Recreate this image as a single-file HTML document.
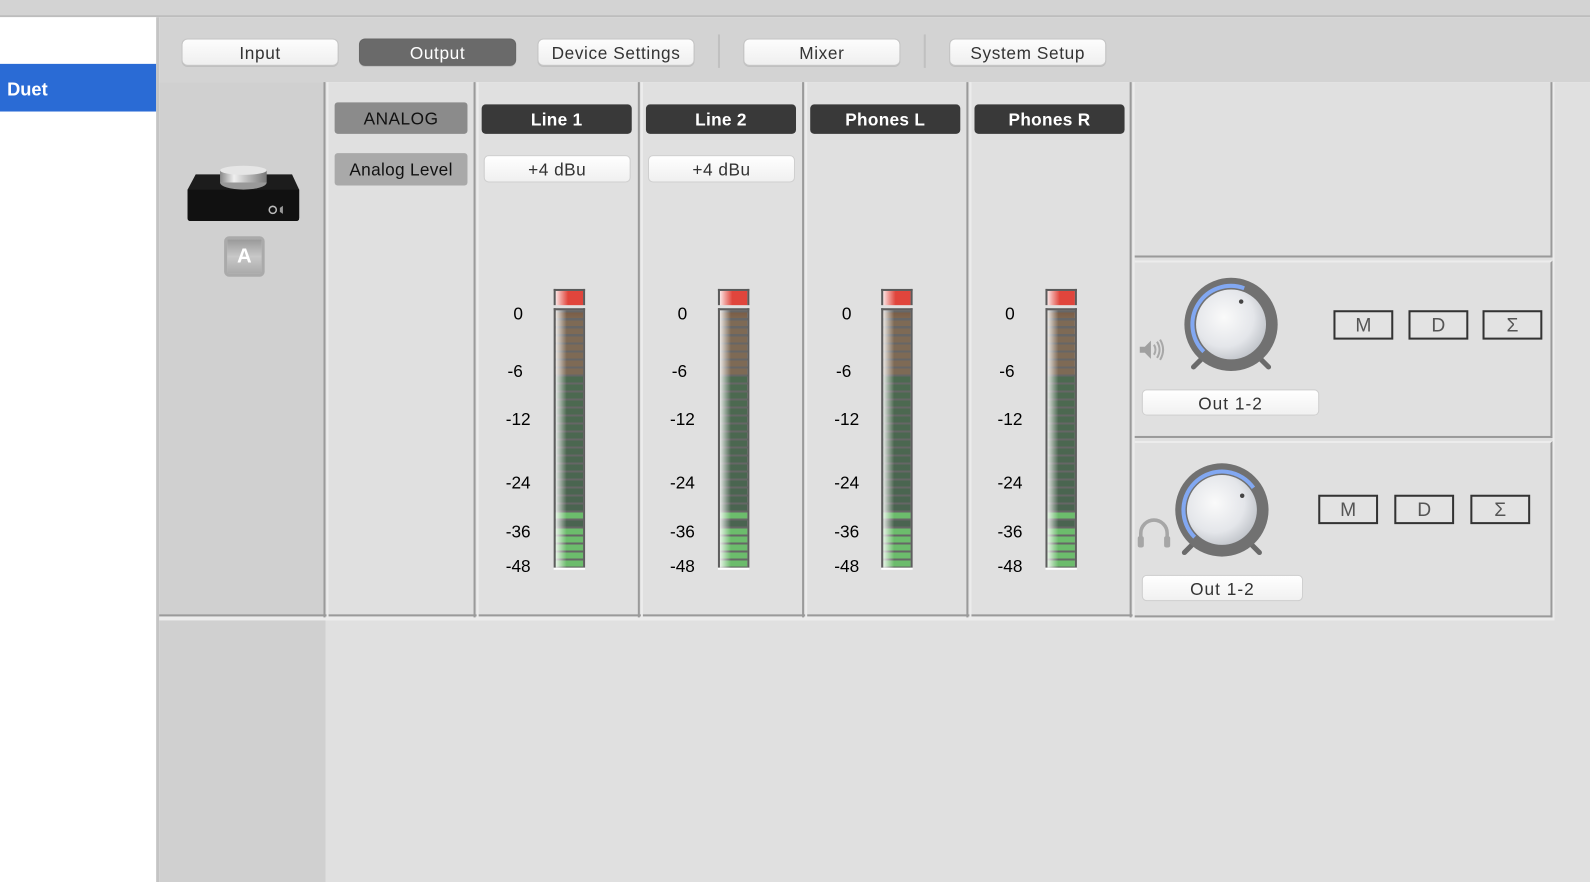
<!DOCTYPE html>
<html><head><meta charset="utf-8">
<style>
html,body{margin:0;padding:0;width:1590px;height:882px;overflow:hidden;background:#fff;font-family:"Liberation Sans",sans-serif;}
#w{position:absolute;left:0;top:0;width:1568px;height:870px;transform:scale(1.01403,1.0138);transform-origin:0 0;background:#fff;}
.a{position:absolute;box-sizing:border-box;}
.tab{position:absolute;top:38px;height:27px;width:155px;border-radius:6px;background:linear-gradient(#fdfdfd,#efefef);border:1px solid #c4c4c4;box-shadow:0 1px 0 #bdbdbd;font-size:17px;color:#333;text-align:center;line-height:28px;letter-spacing:0.6px;box-sizing:border-box;}
.tab.on{background:#6a6a6a;color:#fff;border-color:#666;}
.sep{position:absolute;top:34px;width:2px;height:33px;background:#c0c0c0;}
.vl{position:absolute;top:81px;width:2px;height:528px;background:#9a9a9a;}
.vlite{position:absolute;top:81px;width:2px;height:528px;background:#ececec;}
.hdr{position:absolute;top:103px;height:29px;width:148px;background:#393939;border-radius:4px;color:#fff;font-weight:bold;font-size:17px;text-align:center;line-height:31px;letter-spacing:0.3px;}
.dbu{position:absolute;top:153px;height:27px;width:145px;background:linear-gradient(#fff,#f0f0f0);border:1px solid #cfcfcf;border-radius:5px;box-sizing:border-box;font-size:17px;color:#333;text-align:center;line-height:28px;letter-spacing:0.5px;}
.lbl{position:absolute;width:40px;text-align:center;font-size:17px;color:#000;}
.clip{position:absolute;top:285px;width:31px;height:16px;border:2px solid #5a5a5a;border-bottom:none;background:linear-gradient(90deg,#fbe6e6,#ef9a95 20%,#e0453c 45%,#e0453c);box-sizing:border-box;}
.meter{position:absolute;top:304px;width:31px;height:256px;border:2px solid #5e5e5e;border-bottom:none;box-sizing:border-box;
background:
linear-gradient(90deg,rgba(255,255,255,.85),rgba(255,255,255,.3) 25%,rgba(255,255,255,0) 40%),
repeating-linear-gradient(#666 0 2px,transparent 2px 7.9px),
linear-gradient(#7b5a42 0,#7e6a55 10px,#7e6a55 64px,#4c6a50 64px,#4a6450 199px,#6cbc6c 199px,#6cbc6c 206px,#4a6450 206px,#4a6450 214px,#6cbc6c 214px,#6cbc6c 100%);}
.meter:after{content:"";position:absolute;left:-2px;right:-2px;bottom:-2px;height:2px;background:#fff;}
.mdb{position:absolute;height:29px;width:59px;border:2px solid #333;background:#e3e3e3;box-sizing:border-box;font-size:19px;color:#555;text-align:center;line-height:27px;}
.out{position:absolute;height:26px;background:linear-gradient(#fff,#f1f1f1);border:1px solid #cfcfcf;border-radius:5px;box-sizing:border-box;font-size:17px;color:#333;text-align:center;line-height:27px;letter-spacing:1px;}
</style></head><body>
<div id="w">
<div class="a" style="left:0;top:0;width:1568px;height:16px;background:#d3d3d3;"></div>
<div class="a" style="left:0;top:15px;width:1568px;height:2px;background:#bdbdbd;"></div>
<div class="a" style="left:0;top:17px;width:155px;height:853px;background:#fff;"></div>
<div class="a" style="left:0;top:63px;width:154px;height:47px;background:#2a6bd5;color:#fff;font-weight:bold;font-size:18px;line-height:50px;padding-left:7px;">Duet</div>
<div class="a" style="left:154px;top:17px;width:3px;height:853px;background:#c4c4c4;"></div>
<div class="a" style="left:157px;top:17px;width:1411px;height:64px;background:#d3d3d3;"></div>
<div class="tab" style="left:179px;">Input</div>
<div class="tab on" style="left:354px;">Output</div>
<div class="tab" style="left:530px;">Device Settings</div>
<div class="sep" style="left:708px;"></div>
<div class="tab" style="left:733px;">Mixer</div>
<div class="sep" style="left:911px;"></div>
<div class="tab" style="left:936px;">System Setup</div>
<div class="a" style="left:157px;top:81px;width:1411px;height:789px;background:#e0e0e0;"></div>
<div class="a" style="left:157px;top:81px;width:164px;height:789px;background:#d0d0d0;"></div>
<div class="a" style="left:157px;top:608px;width:1376px;height:4px;background:#ececec;"></div>
<div class="a" style="left:157px;top:606px;width:960px;height:2px;background:#9a9a9a;"></div>
<div class="vl" style="left:319px;"></div>
<div class="vlite" style="left:322px;"></div>
<div class="vl" style="left:467px;"></div>
<div class="vlite" style="left:470px;"></div>
<div class="vl" style="left:629px;"></div>
<div class="vlite" style="left:632px;"></div>
<div class="vl" style="left:791px;"></div>
<div class="vlite" style="left:794px;"></div>
<div class="vl" style="left:953px;"></div>
<div class="vlite" style="left:956px;"></div>
<div class="vl" style="left:1114px;"></div>
<div class="vlite" style="left:1117px;"></div>
<div class="a" style="left:1119px;top:81px;width:412px;height:173px;border-right:2px solid #9a9a9a;border-bottom:2px solid #9a9a9a;"></div>
<div class="a" style="left:1119px;top:257px;width:412px;height:175px;border-right:2px solid #9a9a9a;border-bottom:2px solid #9a9a9a;border-top:2px solid #ececec;"></div>
<div class="a" style="left:1119px;top:435px;width:412px;height:174px;border-right:2px solid #9a9a9a;border-bottom:2px solid #9a9a9a;border-top:2px solid #ececec;"></div>
<div class="a" style="left:1531px;top:81px;width:2px;height:530px;background:#ececec;"></div>

<svg class="a" style="left:183px;top:163px;" width="115" height="60" viewBox="0 0 115 60">
<defs><linearGradient id="kg"><stop offset="0" stop-color="#888"/><stop offset=".3" stop-color="#f0f0f0"/><stop offset=".6" stop-color="#bbb"/><stop offset="1" stop-color="#777"/></linearGradient></defs>
<path d="M10 9 L105 9 L112 24 L112 52 Q112 55 109 55 L5 55 Q2 55 2 52 L2 24 Z" fill="#1c1c1c"/>
<path d="M2 24 L112 24 L112 52 Q112 55 109 55 L5 55 Q2 55 2 52 Z" fill="#111"/>
<ellipse cx="57" cy="17" rx="23" ry="7" fill="#999"/>
<rect x="34" y="5" width="46" height="12" fill="url(#kg)"/>
<ellipse cx="57" cy="5" rx="23" ry="4.5" fill="#e6e6e6"/>
<circle cx="86" cy="44" r="3.5" fill="none" stroke="#bbb" stroke-width="1.5"/>
<path d="M93 42 L96 40 L96 48 L93 46 Z" fill="#999"/>
</svg>
<div class="a" style="left:221px;top:233px;width:40px;height:40px;border:3px solid #aaa;border-radius:5px;background:linear-gradient(#999,#c8c8c8 50%,#aaa);color:#fff;font-weight:bold;font-size:20px;text-align:center;line-height:34px;">A</div>

<div class="a" style="left:330px;top:101px;width:131px;height:31px;background:#8b8b8b;border-radius:3px;font-size:17px;text-align:center;line-height:34px;color:#111;letter-spacing:0.5px;">ANALOG</div>
<div class="a" style="left:330px;top:151px;width:131px;height:32px;background:#a9a9a9;border-radius:3px;font-size:17px;text-align:center;line-height:34px;color:#111;letter-spacing:0.3px;">Analog Level</div>

<div class="hdr" style="left:475px;">Line 1</div>
<div class="hdr" style="left:637px;">Line 2</div>
<div class="hdr" style="left:799px;">Phones L</div>
<div class="hdr" style="left:961px;">Phones R</div>
<div class="dbu" style="left:477px;">+4 dBu</div>
<div class="dbu" style="left:639px;">+4 dBu</div>

<div class="clip" style="left:546px;"></div><div class="meter" style="left:546px;"></div>
<div class="clip" style="left:708px;"></div><div class="meter" style="left:708px;"></div>
<div class="clip" style="left:869px;"></div><div class="meter" style="left:869px;"></div>
<div class="clip" style="left:1031px;"></div><div class="meter" style="left:1031px;"></div>

<div class="lbl" style="left:491px;top:300px;">0</div><div class="lbl" style="left:488px;top:357px;">-6</div><div class="lbl" style="left:491px;top:404px;">-12</div><div class="lbl" style="left:491px;top:467px;">-24</div><div class="lbl" style="left:491px;top:515px;">-36</div><div class="lbl" style="left:491px;top:549px;">-48</div>
<div class="lbl" style="left:653px;top:300px;">0</div><div class="lbl" style="left:650px;top:357px;">-6</div><div class="lbl" style="left:653px;top:404px;">-12</div><div class="lbl" style="left:653px;top:467px;">-24</div><div class="lbl" style="left:653px;top:515px;">-36</div><div class="lbl" style="left:653px;top:549px;">-48</div>
<div class="lbl" style="left:815px;top:300px;">0</div><div class="lbl" style="left:812px;top:357px;">-6</div><div class="lbl" style="left:815px;top:404px;">-12</div><div class="lbl" style="left:815px;top:467px;">-24</div><div class="lbl" style="left:815px;top:515px;">-36</div><div class="lbl" style="left:815px;top:549px;">-48</div>
<div class="lbl" style="left:976px;top:300px;">0</div><div class="lbl" style="left:973px;top:357px;">-6</div><div class="lbl" style="left:976px;top:404px;">-12</div><div class="lbl" style="left:976px;top:467px;">-24</div><div class="lbl" style="left:976px;top:515px;">-36</div><div class="lbl" style="left:976px;top:549px;">-48</div>

<svg class="a" style="left:1164px;top:270px;" width="100" height="100" viewBox="0 0 100 100">
<defs><radialGradient id="kw" cx=".4" cy=".4" r=".7"><stop offset="0" stop-color="#fafafa"/><stop offset=".6" stop-color="#e4e6ea"/><stop offset="1" stop-color="#b8bcc2"/></radialGradient></defs>
<path d="M20 85 L13 92 M80 85 L87 92" stroke="#6a6a6a" stroke-width="5" stroke-linecap="round"/>
<circle cx="50" cy="50" r="46" fill="#717171"/>
<path d="M23.1 76.9 A38 38 0 0 1 63 14.3" fill="none" stroke="#82a8f2" stroke-width="4"/>
<circle cx="50" cy="50" r="34.5" fill="url(#kw)"/>
<circle cx="60" cy="27.5" r="2.2" fill="#444"/>
</svg>
<svg class="a" style="left:1155px;top:453px;" width="100" height="100" viewBox="0 0 100 100">
<path d="M20 85 L13 92 M80 85 L87 92" stroke="#6a6a6a" stroke-width="5" stroke-linecap="round"/>
<circle cx="50" cy="50" r="46" fill="#717171"/>
<path d="M23.1 76.9 A38 38 0 1 1 81.1 28.2" fill="none" stroke="#82a8f2" stroke-width="4"/>
<circle cx="50" cy="50" r="34.5" fill="url(#kw)"/>
<circle cx="70" cy="36" r="2.2" fill="#444"/>
</svg>
<svg class="a" style="left:1122px;top:330px;" width="30" height="30" viewBox="0 0 30 30">
<path d="M2 12 L7 12 L13 6 L13 24 L7 18 L2 18 Z" fill="#a0a0a0"/>
<path d="M16 10 Q19 15 16 20 M19 7 Q24 15 19 23 M22 5 Q28 15 22 25" fill="none" stroke="#a8a8a8" stroke-width="2"/>
</svg>
<svg class="a" style="left:1120px;top:508px;" width="36" height="34" viewBox="0 0 36 34">
<path d="M5 28 L5 18 A13 13 0 0 1 31 18 L31 28" fill="none" stroke="#a6a6a6" stroke-width="3.5"/>
<rect x="2" y="21" width="6" height="11" rx="2" fill="#a6a6a6"/>
<rect x="28" y="21" width="6" height="11" rx="2" fill="#a6a6a6"/>
</svg>

<div class="mdb" style="left:1315px;top:306px;">M</div>
<div class="mdb" style="left:1389px;top:306px;">D</div>
<div class="mdb" style="left:1462px;top:306px;">Σ</div>
<div class="mdb" style="left:1300px;top:488px;">M</div>
<div class="mdb" style="left:1375px;top:488px;">D</div>
<div class="mdb" style="left:1450px;top:488px;">Σ</div>

<div class="out" style="left:1126px;top:384px;width:175px;">Out 1-2</div>
<div class="out" style="left:1126px;top:567px;width:159px;">Out 1-2</div>
</div>
</body></html>
